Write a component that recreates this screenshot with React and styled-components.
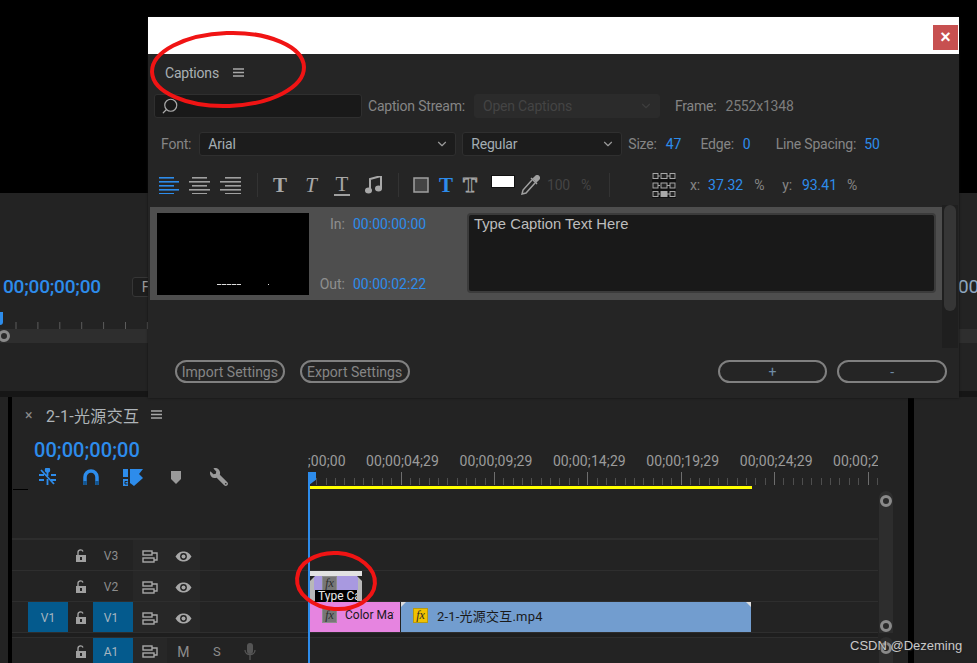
import styled, { createGlobalStyle } from 'styled-components';
import { ChevronDown, Search } from 'lucide-react';
import { FaWrench } from 'react-icons/fa';

const BLUE = '#2d8ceb';
const UI = 'Roboto, "Noto Sans", sans-serif';

const GlobalStyle = createGlobalStyle`
  html, body { margin: 0; padding: 0; background: #000; }
  * { box-sizing: border-box; }
`;

const Page = styled.div`
  position: relative;
  width: 977px;
  height: 663px;
  overflow: hidden;
  background: #000;
  font-family: ${UI};
  font-size: 14px;
  color: #8c8c8c;
  display: flex;
  flex-direction: column;
`;

const TopBlack = styled.div`
  height: 193px;
  flex: none;
`;

/* program monitor behind the dialog */
const ProgramPanel = styled.div`
  position: relative;
  height: 198px;
  flex: none;
  background: #232323;
  padding-top: 84px;
  overflow: hidden;
`;

const ProgramRow = styled.div`
  display: flex;
  align-items: center;
  height: 20px;
  padding-left: 3px;
`;

const ProgramTime = styled.span`
  color: ${BLUE};
  font-size: 19px;
  font-weight: 500;
  line-height: 20px;
  letter-spacing: -0.2px;
`;

const FitBox = styled.span`
  margin-left: 31px;
  width: 40px;
  height: 20px;
  border: 1px solid #363636;
  border-radius: 3px;
  background: #1d1d1d;
  padding: 0 0 0 9px;
  color: #999;
  line-height: 18px;
`;

const ProgramTimeRight = styled(ProgramTime)`
  margin-left: auto;
  margin-right: -2px;
  font-weight: 400;
  color: #8fa6c0;
`;

const ProgramTicks = styled.svg`
  display: block;
  margin-top: 25px;
`;

const ScrubBar = styled.div`
  height: 14px;
  background: #2e2e2e;
  display: flex;
  align-items: center;
  padding-left: 0;
`;

const Knob = styled.span`
  flex: none;
  display: block;
  width: 12px;
  height: 12px;
  border-radius: 50%;
  border: 3px solid #8a8a8a;
  background: #2a2a2a;
  margin-left: ${p => p.$left || 0}px;
`;

const ProgramMarker = styled.span`
  position: absolute;
  left: 0;
  top: 119px;
  width: 3px;
  height: 13px;
  background: ${BLUE};
  border-radius: 0 0 3px 0;
`;

const PanelGap = styled.div`
  height: 6px;
  flex: none;
  background: #161616;
`;

const LowerRow = styled.div`
  flex: 1;
  display: flex;
  min-height: 0;
  background: #000;
`;

const SidePanel = styled.div`
  flex: none;
  width: ${p => p.$width}px;
  margin-left: ${p => p.$gap || 0}px;
  background: #232323;
`;

/* timeline */
const Timeline = styled.div`
  position: relative;
  flex: none;
  width: 896px;
  margin-left: 4px;
  background: #232323;
  display: flex;
  flex-direction: column;
  overflow: hidden;
`;

const TabRow = styled.div`
  height: 40px;
  flex: none;
  display: flex;
  align-items: center;
  padding: 0 0 5px 13px;
  color: #a8a8a8;
`;

const TabClose = styled.span`
  font-size: 14px;
  width: 21px;
  color: #8a8a8a;
`;

const TabTitle = styled.span`
  font-family: ${UI.split(',')[0]}, "Noto Sans CJK SC", sans-serif;
  font-size: 16px;
  letter-spacing: 0.3px;
  color: #aeb4b8;
`;

const Burger = styled.svg`
  flex: none;
  margin-left: ${p => p.$left}px;
`;

const TimelineTop = styled.div`
  display: flex;
  height: 52px;
  flex: none;
`;

const TimelineControls = styled.div`
  width: 296px;
  flex: none;
  padding: 2px 0 0 22px;
`;

const SeqTime = styled.div`
  color: ${BLUE};
  font-size: 20px;
  font-weight: 500;
  line-height: 22px;
  letter-spacing: 0.05px;
`;

const ToolRow = styled.div`
  display: flex;
  align-items: center;
  height: 24px;
  margin-top: 4px;
  color: #9a9a9a;
`;

const ToolSlot = styled.span`
  display: flex;
  justify-content: center;
  flex: none;
  width: ${p => p.$w}px;
`;

const Ruler = styled.div`
  position: relative;
  width: 570px;
  overflow: hidden;
  margin-bottom: 0;
`;

const RulerLabels = styled.div`
  display: flex;
  margin-left: -45.5px;
  height: 35px;
  padding-top: 15px;
`;

const RulerLabel = styled.span`
  flex: none;
  width: 93.4px;
  text-align: center;
  font-size: 14px;
  line-height: 18px;
  letter-spacing: 0.1px;
  color: #9b9b9b;
  white-space: nowrap;
`;

const RulerTicks = styled.svg`
  display: block;
`;

const WorkArea = styled.div`
  position: absolute;
  left: 1px;
  bottom: 0;
  width: 443px;
  height: 3px;
  background: #ffff00;
`;

const TracksWrap = styled.div`
  flex: 1;
  display: flex;
  min-height: 0;
`;

const Tracks = styled.div`
  width: 866px;
  flex: none;
  display: flex;
  flex-direction: column;
`;

const EmptyTracks = styled.div`
  height: 51px;
  flex: none;
  border-bottom: 2px solid #2d2d2d;
`;

const TopNotch = styled.span`
  display: block;
  width: 15px;
  height: 1px;
  margin-left: 1px;
  background: #000;
`;

const Track = styled.div`
  display: flex;
  height: ${p => p.$height}px;
  flex: none;
  border-bottom: 1px solid #2e2e2e;
`;

const TrackSplit = styled.div`
  height: 5px;
  flex: none;
  background: #1e1e1e;
  border-bottom: 1px solid #2e2e2e;
`;

const TrackHead = styled.div`
  width: 296px;
  flex: none;
  display: grid;
  grid-template-columns: 16px 40px 25px 40px 33.5px 33.5px 33.5px 33.5px 41px;
  align-items: stretch;
`;

const Cell = styled.span`
  display: flex;
  align-items: center;
  justify-content: center;
  padding-top: 2px;
  padding-right: ${p => p.$nudge || 0}px;
  font-size: 12px;
  color: ${p => (p.$on ? '#a7b6c0' : '#8d8d8d')};
  background: ${p => (p.$on ? '#045a8d' : p.$dim ? '#272727' : 'transparent')};
`;

const LetterCell = styled(Cell)`
  font-size: ${p => p.$size}px;
`;

const Lane = styled.div`
  flex: 1;
  display: flex;
  padding-left: 2px;
  min-width: 0;
`;

const Clip = styled.div`
  position: relative;
  flex: none;
  width: ${p => p.$w}px;
  margin-right: ${p => p.$gap || 0}px;
  background: ${p => p.$bg};
  display: flex;
  align-items: center;
  padding: 0 6px 4px 12px;
  color: #1a1a1a;
  font-size: ${p => p.$size || 12}px;
  white-space: nowrap;
  overflow: hidden;
`;

const FxBadge = styled.span`
  flex: none;
  width: 15px;
  height: 15px;
  display: flex;
  align-items: center;
  justify-content: center;
  font: italic 12px "Liberation Serif", serif;
  color: #2c2c2c;
  background: ${p => p.$bg || '#777'};
  border: 1px solid ${p => (p.$bg ? '#b79a10' : '#8d8d8d')};
  margin-right: ${p => p.$mr}px;
`;

const ClipName = styled.span`
  min-width: 0;
  overflow: hidden;
  font-family: ${UI.split(',')[0]}, "Noto Sans CJK SC", sans-serif;
  letter-spacing: ${p => p.$ls || 0}px;
`;

const Corner = styled.i`
  position: absolute;
  top: 0;
  ${p => (p.$right ? 'right: 0;' : 'left: 0;')}
  width: 5px;
  height: 5px;
  background: ${p => p.$color || '#ddd'};
  clip-path: ${p =>
    p.$right ? 'polygon(0 0, 100% 0, 100% 100%)' : 'polygon(0 0, 100% 0, 0 100%)'};
`;

const CaptionClip = styled.div`
  position: relative;
  flex: none;
  width: 52px;
  height: 100%;
  background: #b8b8b8;
  border-top: 5px solid #e2e2e2;
`;

const CaptionFill = styled.div`
  height: 14px;
  margin: 0 4px;
  background: #a899e0;
  padding-left: 8px;
`;

const CaptionLabel = styled.div`
  margin-left: 5px;
  width: 42px;
  height: 12px;
  background: #000;
  color: #e8e8e8;
  font-size: 12px;
  line-height: 12px;
  padding-left: 3px;
  overflow: hidden;
  white-space: nowrap;
`;

const ScrollColumn = styled.div`
  width: 14px;
  flex: none;
  display: flex;
  flex-direction: column;
  margin-left: 1px;
`;

const ScrollPart = styled.div`
  background: #2d2d2d;
  border-radius: 7px 7px 0 0;
  height: ${p => p.$h}px;
  margin-top: ${p => p.$top}px;
  padding: ${p => p.$pad}px 1px 1px;
  display: flex;
  flex-direction: column;
  justify-content: space-between;
  flex: none;
`;

const Playhead = styled.span`
  position: absolute;
  left: 296px;
  top: 86px;
  width: 2px;
  bottom: 0;
  background: ${BLUE};
`;

const PlayheadCap = styled.span`
  position: absolute;
  left: 296px;
  top: 75px;
  width: 8px;
  height: 12px;
  background: ${BLUE};
  clip-path: polygon(0 0, 100% 0, 100% 65%, 30% 100%, 0 100%);
`;

/* captions dialog */
const Dialog = styled.div`
  position: absolute;
  left: 148px;
  top: 17px;
  width: 811px;
  height: 381px;
  background: #252525;
  box-shadow: 0 0 2px #111;
  display: flex;
  flex-direction: column;
`;

const TitleBar = styled.div`
  height: 37px;
  flex: none;
  background: #fff;
  display: flex;
  justify-content: flex-end;
  align-items: flex-start;
  padding: 8px 1px 0 0;
`;

const CloseButton = styled.button`
  width: 25px;
  height: 25px;
  padding: 0;
  border: 0;
  background: #c75050;
  color: #fff;
  font: 700 18px/25px "Liberation Sans", sans-serif;
`;

const PanelHead = styled.div`
  height: 37px;
  flex: none;
  display: flex;
  align-items: center;
  padding: 0 0 0 17px;
  letter-spacing: -0.2px;
  color: #a9b0b4;
`;

const Row = styled.div`
  display: flex;
  align-items: center;
  flex: none;
  height: ${p => p.$h}px;
  margin-top: ${p => p.$top || 0}px;
  padding-left: ${p => p.$pad || 0}px;
  white-space: nowrap;
`;

const SearchBox = styled.div`
  width: 208px;
  height: 24px;
  background: #191919;
  border: 1px solid #2f2f2f;
  border-radius: 3px;
  display: flex;
  align-items: center;
  padding-left: 6px;
  color: #aaa;
`;

const Label = styled.span`
  flex: none;
  margin-left: ${p => p.$left || 0}px;
  letter-spacing: -0.2px;
  color: ${p => p.$color || '#858585'};
`;

const Value = styled.span`
  flex: none;
  margin-left: ${p => p.$left || 0}px;
  color: ${BLUE};
`;

const Select = styled.div`
  flex: none;
  width: ${p => p.$w}px;
  height: 24px;
  margin-left: ${p => p.$left || 0}px;
  border-radius: 3px;
  display: flex;
  align-items: center;
  justify-content: space-between;
  padding: 0 6px 0 8px;
  letter-spacing: -0.2px;
  background: ${p => (p.$disabled ? '#2b2b2b' : '#1c1c1c')};
  border: 1px solid ${p => (p.$disabled ? '#2b2b2b' : '#2f2f2f')};
  color: ${p => (p.$disabled ? '#444' : '#a3adb3')};
`;

const ToolIcon = styled.svg`
  flex: none;
  display: block;
  margin-left: ${p => p.$left || 0}px;
  color: ${p => p.$color || '#a0a0a0'};
`;

const Divider = styled.span`
  flex: none;
  width: 1px;
  height: 24px;
  background: #333;
  margin-left: ${p => p.$left}px;
`;

const GlyphT = styled.span`
  flex: none;
  width: ${p => p.$w || 16}px;
  margin-left: ${p => p.$left}px;
  text-align: center;
  font-family: "Liberation Serif", serif;
  font-size: 21px;
  line-height: 20px;
  font-weight: ${p => (p.$weight ? p.$weight : 400)};
  font-style: ${p => (p.$italic ? 'italic' : 'normal')};
  color: ${p => p.$color || '#a8a8a8'};
  border-bottom: ${p => (p.$under ? '2px solid #a0a0a0' : '0')};
  -webkit-text-stroke: ${p => (p.$outline ? '1px #a8a8a8' : '0')};
  ${p => (p.$outline ? 'color: transparent;' : '')}
`;

const Swatch = styled.span`
  flex: none;
  width: 24px;
  height: 13px;
  margin: -7px 0 0 ${p => p.$left}px;
  background: #fff;
  border: 1px solid #111;
`;

const ListArea = styled.div`
  display: flex;
  height: 141px;
  flex: none;
  margin: 8px 0 0 2px;
`;

const CaptionList = styled.div`
  width: 792px;
  flex: none;
`;

const CaptionItem = styled.div`
  height: 93px;
  background: #4e4e4e;
  display: flex;
  padding: 6px 0 0 7px;
`;

const Thumb = styled.div`
  width: 152px;
  height: 82px;
  flex: none;
  background: #000;
  display: flex;
  align-items: flex-end;
  padding: 0 0 10px 60px;
`;

const ThumbDash = styled.span`
  display: block;
  height: 1px;
  width: ${p => p.$w}px;
  margin-right: 27px;
  background: repeating-linear-gradient(90deg, #ddd 0 4px, #555 4px 5px);
`;

const Times = styled.div`
  width: 116px;
  flex: none;
  height: 82px;
  padding: 2px 0;
  display: flex;
  flex-direction: column;
  justify-content: space-between;
`;

const TimeLine = styled.div`
  display: grid;
  grid-template-columns: 36px auto;
  column-gap: 8px;
  line-height: 18px;
`;

const TimeLabel = styled.span`
  text-align: right;
  color: #8e8e8e;
`;

const CaptionText = styled.div`
  flex: none;
  width: 469px;
  height: 80px;
  margin-left: 42px;
  background: #191919;
  border: 2px solid #3b3b3b;
  border-radius: 4px;
  padding: 0 5px;
  font: 14.8px/18px "Liberation Sans", sans-serif;
  color: #bdbdbd;
`;

const ListScroll = styled.div`
  width: 16px;
  flex: none;
  background: #1f1f1f;
  padding: 0 2px;
  margin-top: -2px;
`;

const ListThumb = styled.div`
  height: 106px;
  background: #363636;
  border-radius: 6px;
`;

const ButtonRow = styled.div`
  display: flex;
  flex: none;
  margin-top: 12px;
  padding: 0 12px 0 27px;
`;

const PillButton = styled.button`
  width: ${p => p.$w}px;
  height: 23px;
  margin-left: ${p => p.$left || 0}px;
  padding: 0;
  border: 2px solid #808080;
  border-radius: 12px;
  background: transparent;
  font: 14px/18px ${UI};
  color: #858585;
`;

const AddButton = styled(PillButton)`
  color: #6f8ba5;
`;

const Annotation = styled.svg`
  position: absolute;
  left: 0;
  top: 0;
  pointer-events: none;
`;

const Watermark = styled.span`
  position: absolute;
  left: 850px;
  top: 637px;
  font: 13px/18px "Liberation Sans", sans-serif;
  color: #c9c9c9;
  text-shadow: 1px 1px 1px #222;
`;

const MenuIcon = ({ left }) => (
  <Burger $left={left} width="11" height="9" viewBox="0 0 11 9" fill="none" stroke="#a8a8a8" strokeWidth="1.4">
    <path d="M0 1h11M0 4.5h11M0 8h11" />
  </Burger>
);

const AlignIcon = ({ lines, color, left }) => (
  <ToolIcon $left={left} width="21" height="17" viewBox="0 0 21 17" style={{ color }}>
    {lines.map(([x, w], i) => (
      <rect key={i} x={x} y={i * 4} width={w} height="1.6" fill="currentColor" />
    ))}
  </ToolIcon>
);

const LockIcon = () => (
  <svg width="12" height="14" viewBox="0 0 12 14" fill="none">
    <path d="M3 6V3.5a2.6 2.6 0 0 1 5 -1" stroke="#a0a0a0" strokeWidth="1.4" />
    <path d="M1 6h10v7H1z" fill="#a0a0a0" />
    <rect x="5" y="8" width="2" height="3" fill="#232323" />
  </svg>
);

const SyncIcon = () => (
  <svg width="16" height="13" viewBox="0 0 16 13" fill="none" stroke="#a8a8a8" strokeWidth="1.4">
    <rect x="1" y="1" width="9" height="4" />
    <rect x="1" y="8" width="11" height="4" />
    <path d="M10 3h5v7h-3" />
  </svg>
);

const EyeIcon = () => (
  <svg width="17" height="11" viewBox="0 0 17 11">
    <path d="M0.5 5.5C3 1.5 5.5 .5 8.5 .5s5.500 1 8 5c-2.500 4-5 5-8 5s-5.500-1-8-5z" fill="#a8a8a8" />
    <circle cx="8.500" cy="5.500" r="3.400" fill="#232323" />
    <circle cx="8.500" cy="5.500" r="2" fill="#a8a8a8" />
  </svg>
);

const MicIcon = () => (
  <svg width="12" height="17" viewBox="0 0 12 17" fill="none">
    <rect x="3" y="0" width="6" height="11" rx="3" fill="#555" />
    <path d="M1 7c0 6 10 6 10 0M6 12v5" stroke="#555" strokeWidth="1.300" />
  </svg>
);

const AnchorGrid = () => (
  <ToolIcon $left={42} width="24" height="25" viewBox="0 0 24 25" fill="none" stroke="#a8a8a8">
    <rect x="0" y="0" width="24" height="25" fill="#111" stroke="none" />
    {[3, 12.500, 21].map(y => (
      <g key={y}>
        <path d={`M5 ${y}h3M15 ${y}h3`} />
        <rect x="1" y={y - 2.500} width="5" height="5" fill="#222" />
        <rect x="9" y={y - 2.500} width="6" height="5" fill={y === 21 ? '#a8a8a8' : '#222'} />
        <rect x="18" y={y - 2.500} width="5" height="5" fill="#222" />
      </g>
    ))}
  </ToolIcon>
);

const rulerNames = ['00;00;00;00', '00;00;04;29', '00;00;09;29', '00;00;14;29', '00;00;19;29', '00;00;24;29', '00;00;29;29', '00;00;34;29'];
const minorTicks = Array.from({ length: 62 }, (_, i) => -0.4 + i * 9.34);
const programTicks = Array.from({ length: 45 }, (_, i) => 16 + i * 21.9);

const TrackHeader = ({ name, source, target, audio }) => (
  <TrackHead>
    <span />
    <Cell $on={source}>{source}</Cell>
    <Cell><LockIcon /></Cell>
    <Cell $on={target} $nudge={4}>{name}</Cell>
    <Cell $dim><SyncIcon /></Cell>
    {audio ? (
      <>
        <LetterCell $size={14}>M</LetterCell>
        <LetterCell $size={13}>S</LetterCell>
        <Cell><MicIcon /></Cell>
      </>
    ) : (
      <>
        <Cell $dim><EyeIcon /></Cell>
        <span />
        <span />
      </>
    )}
  </TrackHead>
);

const App = () => {
  return (
    <Page>
      <GlobalStyle />
      <TopBlack />
      <ProgramPanel>
        <ProgramRow>
          <ProgramTime>00;00;00;00</ProgramTime>
          <FitBox>F</FitBox>
          <ProgramTimeRight>00</ProgramTimeRight>
        </ProgramRow>
        <ProgramTicks width="977" height="7" viewBox="0 0 977 7">
          {programTicks.map(x => (
            <line key={x} x1={x} x2={x} y1="0" y2="7" stroke="#5c5c5c" />
          ))}
        </ProgramTicks>
        <ScrubBar>
          <Knob $left={-2} />
        </ScrubBar>
        <ProgramMarker />
      </ProgramPanel>
      <PanelGap />
      <LowerRow>
        <SidePanel $width={8} />
        <Timeline>
          <TabRow>
            <TabClose>×</TabClose>
            <TabTitle>2-1-光源交互</TabTitle>
            <MenuIcon left={12} />
          </TabRow>
          <TimelineTop>
            <TimelineControls>
              <SeqTime>00;00;00;00</SeqTime>
              <ToolRow>
                <ToolSlot $w={26}>
                  <svg width="19" height="18" viewBox="0 0 19 18" fill="none" stroke={BLUE} strokeWidth="1.800">
                    <circle cx="9.500" cy="2" r="1.800" fill={BLUE} />
                    <path d="M9.500 3v5M1 7h5M13 7h5M1 12h5M13 12h5M3 2l13 14" />
                    <path d="M9.500 11v6" />
                  </svg>
                </ToolSlot>
                <ToolSlot $w={61}>
                  <svg width="16" height="16" viewBox="0 0 16 16" fill="none">
                    <path d="M2 16V8a6 6 0 0 1 12 0v8" stroke={BLUE} strokeWidth="3.500" />
                    <path d="M0.200 12h3.600v4H.2zM12.200 12h3.600v4h-3.600z" fill="#14558f" />
                  </svg>
                </ToolSlot>
                <ToolSlot $w={24}>
                  <svg width="20" height="17" viewBox="0 0 20 17">
                    <path d="M0 0h5v8H0zM0 10h5v7H0z" fill={BLUE} />
                    <path d="M2 12.500h2.500M2 12.500v2.500M2 15h2.500" stroke="#232323" />
                    <path d="M7 0h13l-4 5 4 4-9 8-4-3z" fill={BLUE} />
                  </svg>
                </ToolSlot>
                <ToolSlot $w={62}>
                  <svg width="10" height="13" viewBox="0 0 10 13">
                    <path d="M0 0h10v8l-5 5-5-5z" fill="#9a9a9a" />
                  </svg>
                </ToolSlot>
                <ToolSlot $w={24}>
                  <FaWrench size={18} style={{ transform: 'scaleX(-1)' }} />
                </ToolSlot>
              </ToolRow>
            </TimelineControls>
            <Ruler>
              <RulerLabels>
                {rulerNames.map(name => (
                  <RulerLabel key={name}>{name}</RulerLabel>
                ))}
              </RulerLabels>
              <RulerTicks width="570" height="13" viewBox="0 0 570 13" shapeRendering="crispEdges">
                {minorTicks.map((x, i) => (
                  <line
                    key={x}
                    x1={x}
                    x2={x}
                    y1={i % 10 === 0 ? 0 : 6}
                    y2="13"
                    stroke={i % 10 === 0 ? '#6e6e6e' : '#4e4e4e'}
                  />
                ))}
              </RulerTicks>
              <WorkArea />
            </Ruler>
          </TimelineTop>
          <TracksWrap>
            <Tracks>
              <EmptyTracks>
                <TopNotch />
              </EmptyTracks>
              <Track $height={31}>
                <TrackHeader name="V3" />
                <Lane />
              </Track>
              <Track $height={31}>
                <TrackHeader name="V2" />
                <Lane>
                  <CaptionClip>
                    <Corner $color="#232323" />
                    <Corner $right $color="#232323" />
                    <CaptionFill>
                      <FxBadge $mr={0}>fx</FxBadge>
                    </CaptionFill>
                    <CaptionLabel>Type Caption</CaptionLabel>
                  </CaptionClip>
                </Lane>
              </Track>
              <Track $height={31}>
                <TrackHeader name="V1" source="V1" target />
                <Lane>
                  <Clip $w={90} $gap={1} $bg="#e684e0">
                    <FxBadge $mr={8}>fx</FxBadge>
                    <ClipName>Color Matte</ClipName>
                  </Clip>
                  <Clip $w={350} $bg="#729dcf" $size={13}>
                    <Corner />
                    <Corner $right />
                    <FxBadge $mr={9} $bg="#f2c200">fx</FxBadge>
                    <ClipName $ls={0.2}>2-1-光源交互.mp4</ClipName>
                  </Clip>
                </Lane>
              </Track>
              <TrackSplit />
              <Track $height={26}>
                <TrackHeader name="A1" target audio />
                <Lane />
              </Track>
            </Tracks>
            <ScrollColumn>
              <ScrollPart $top={2} $pad={4} $h={142}>
                <Knob />
                <Knob />
              </ScrollPart>
              <ScrollPart $top={4} $pad={5} $h={40}>
                <Knob />
              </ScrollPart>
            </ScrollColumn>
          </TracksWrap>
          <Playhead />
          <PlayheadCap />
        </Timeline>
        <SidePanel $width={63} $gap={6} />
      </LowerRow>

      <Dialog>
        <TitleBar>
          <CloseButton>×</CloseButton>
        </TitleBar>
        <PanelHead>
          Captions
          <MenuIcon left={14} />
        </PanelHead>
        <Row $h={30} $pad={6}>
          <SearchBox>
            <Search size={18} strokeWidth={1.600} style={{ transform: 'scaleX(-1)' }} />
          </SearchBox>
          <Label $left={6}>Caption Stream:</Label>
          <Select $w={186} $left={9} $disabled>
            Open Captions
            <ChevronDown size={14} color="#3d3d3d" />
          </Select>
          <Label $left={15}>Frame:</Label>
          <Label $left={9} $color="#7d7d7d">2552x1348</Label>
        </Row>
        <Row $h={24} $top={11} $pad={13}>
          <Label>Font:</Label>
          <Select $w={257} $left={8}>
            Arial
            <ChevronDown size={14} color="#9a9a9a" />
          </Select>
          <Select $w={160} $left={6}>
            Regular
            <ChevronDown size={14} color="#9a9a9a" />
          </Select>
          <Label $left={6}>Size:</Label>
          <Value $left={9}>47</Value>
          <Label $left={19}>Edge:</Label>
          <Value $left={9}>0</Value>
          <Label $left={25}>Line Spacing:</Label>
          <Value $left={8}>50</Value>
        </Row>
        <Row $h={28} $top={15} $pad={11}>
          <AlignIcon color={BLUE} lines={[[0, 15], [0, 20], [0, 15], [0, 20], [0, 15]]} />
          <AlignIcon color="#a0a0a0" left={9} lines={[[3, 15], [0, 21], [3, 15], [0, 21], [3, 15]]} />
          <AlignIcon color="#a0a0a0" left={10} lines={[[5, 16], [0, 21], [5, 16], [0, 21], [5, 16]]} />
          <Divider $left={16} />
          <GlyphT $left={14} $weight={700}>T</GlyphT>
          <GlyphT $left={15} $italic>T</GlyphT>
          <GlyphT $left={15} $under>T</GlyphT>
          <ToolIcon $left={15} width="17" height="18" viewBox="0 0 17 18">
            <path d="M5 14V3l11-3v12" fill="none" stroke="#a8a8a8" strokeWidth="2" />
            <ellipse cx="3.500" cy="14.500" rx="3.500" ry="3" fill="#a8a8a8" />
            <ellipse cx="13.500" cy="12.500" rx="3.500" ry="3" fill="#a8a8a8" />
          </ToolIcon>
          <Divider $left={16} />
          <ToolIcon $left={14} width="16" height="16" viewBox="0 0 16 16">
            <rect x="1" y="1" width="14" height="14" fill="#444" stroke="#a0a0a0" strokeWidth="1.500" />
          </ToolIcon>
          <GlyphT $left={9} $weight={700} $color={BLUE}>T</GlyphT>
          <GlyphT $left={8} $weight={700} $outline>T</GlyphT>
          <Swatch $left={13} />
          <ToolIcon $left={6} width="19" height="20" viewBox="0 0 19 20" fill="none" stroke="#a0a0a0" strokeWidth="1.500">
            <path d="M11 5L2 15l-1 4 4-1 9-10" />
            <path d="M10 3l6 6M12 4l3-3c2-1 4 1 3 3l-3 3" fill="#a0a0a0" />
          </ToolIcon>
          <Label $left={7} $color="#444">100</Label>
          <Label $left={11} $color="#444">%</Label>
          <Divider $left={18} />
          <AnchorGrid />
          <Label $left={14}>x:</Label>
          <Value $left={8}>37.32</Value>
          <Label $left={11}>%</Label>
          <Label $left={18}>y:</Label>
          <Value $left={10}>93.41</Value>
          <Label $left={10}>%</Label>
        </Row>
        <ListArea>
          <CaptionList>
            <CaptionItem>
              <Thumb>
                <ThumbDash $w={24} />
                <ThumbDash $w={1} />
              </Thumb>
              <Times>
                <TimeLine>
                  <TimeLabel>In:</TimeLabel>
                  <Value>00:00:00:00</Value>
                </TimeLine>
                <TimeLine>
                  <TimeLabel>Out:</TimeLabel>
                  <Value>00:00:02:22</Value>
                </TimeLine>
              </Times>
              <CaptionText>Type Caption Text Here</CaptionText>
            </CaptionItem>
          </CaptionList>
          <ListScroll>
            <ListThumb />
          </ListScroll>
        </ListArea>
        <ButtonRow>
          <PillButton $w={110}>Import Settings</PillButton>
          <PillButton $w={110} $left={15}>Export Settings</PillButton>
          <AddButton $w={110} $left={308}>+</AddButton>
          <AddButton $w={110} $left={10}>-</AddButton>
        </ButtonRow>
      </Dialog>

      <Annotation width="977" height="663" viewBox="0 0 977 663" fill="none" stroke="#f01414" strokeWidth="4">
        <ellipse cx="228" cy="69.500" rx="76" ry="36.500" transform="rotate(-2 228 69.500)" />
        <ellipse cx="336" cy="581" rx="39" ry="28" transform="rotate(4 336 581)" />
      </Annotation>
      <Watermark>CSDN @Dezeming</Watermark>
    </Page>
  );
};

export default App;
